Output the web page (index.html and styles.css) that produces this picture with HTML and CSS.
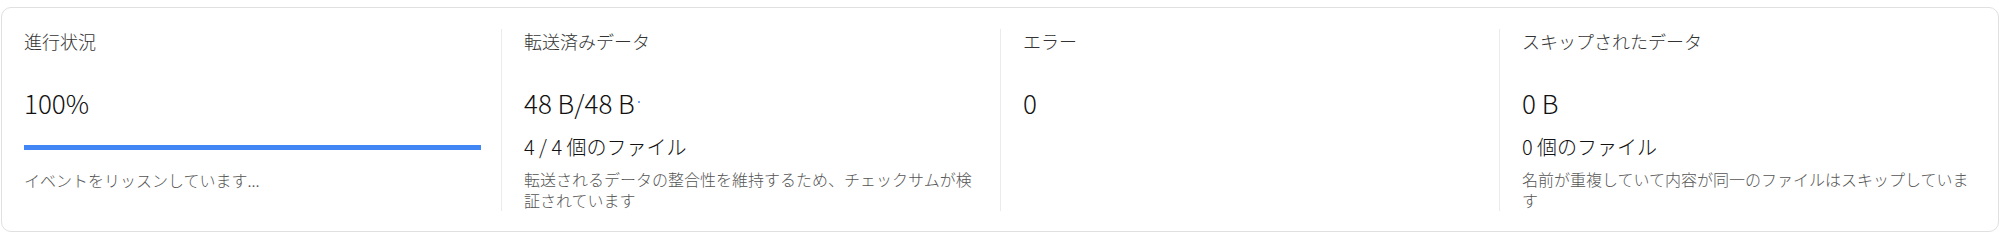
FILE: index.html
```html
<!DOCTYPE html>
<html lang="ja">
<head>
  <meta charset="UTF-8">
  <meta name="viewport" content="width=device-width, initial-scale=1.0">
  <title>転送の状況</title>
  <link rel="stylesheet" href="styles.css">
</head>
<body>
  <div class="summary">
    <div class="stat">
      <div class="stat-label">進行状況</div>
      <div class="stat-value">100%</div>
      <div class="progress"><div class="progress-fill" style="width: 100%"></div></div>
      <div class="stat-note progress-note">イベントをリッスンしています...</div>
    </div>
    <div class="stat">
      <div class="stat-label">転送済みデータ</div>
      <div class="stat-value">48 B/48 B<span class="live-dot"></span></div>
      <div class="stat-files">4 / 4 個のファイル</div>
      <div class="stat-note">転送されるデータの整合性を維持するため、チェックサムが検証されています</div>
    </div>
    <div class="stat">
      <div class="stat-label">エラー</div>
      <div class="stat-value">0</div>
    </div>
    <div class="stat">
      <div class="stat-label">スキップされたデータ</div>
      <div class="stat-value">0 B</div>
      <div class="stat-files">0 個のファイル</div>
      <div class="stat-note">名前が重複していて内容が同一のファイルはスキップしています</div>
    </div>
  </div>
</body>
</html>
```

FILE: styles.css
```css
body {
  font-family: 'Noto Sans CJK JP', 'Noto Sans', sans-serif;
  background-color: #fff;
  color: #202124;
  margin: 0;
  padding: 7px 1px 9px;
}
.summary {
  display: grid;
  grid-template-columns: repeat(4, 1fr);
  border: 1px solid #e0e0e0;
  border-radius: 10px;
  padding: 21px 0 20px;
}
.stat {
  display: flex;
  flex-direction: column;
  padding: 0 20px 0 22px;
  border-left: 1px solid #ebebeb;
  min-width: 0;
}
.stat:first-child {
  border-left: none;
}
.stat-label {
  font-size: 18px;
  line-height: 24px;
  font-weight: 300;
  color: #333;
}
.stat-value {
  margin-top: 34px;
  font-size: 26px;
  line-height: 32px;
  font-weight: 300;
  color: #111;
}
.live-dot {
  display: inline-block;
  width: 2px;
  height: 2px;
  margin-left: 3px;
  vertical-align: 11px;
  border-radius: 50%;
  background-color: #4285f4;
}
.progress {
  margin-top: 26px;
  height: 5px;
  background-color: #e8eaed;
}
.progress-fill {
  height: 100%;
  background-color: #4285f4;
}
.stat-files {
  margin-top: 14px;
  font-size: 20px;
  line-height: 28px;
  font-weight: 300;
  color: #111;
}
.stat-note {
  margin-top: 8px;
  font-size: 16px;
  line-height: 21px;
  font-weight: 300;
  color: #555;
}
.progress-note {
  margin-top: 20px;
}
```
